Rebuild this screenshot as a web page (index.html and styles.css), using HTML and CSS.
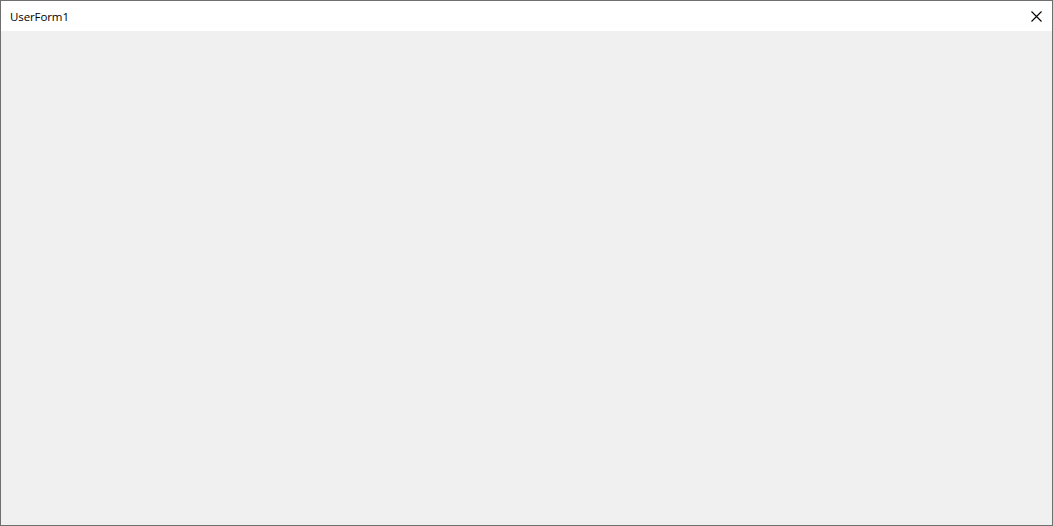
FILE: index.html
```html
<!DOCTYPE html>
<html>
<head>
<meta charset="utf-8">
<link rel="stylesheet" href="styles.css">
</head>
<body>
<div class="window">
  <div class="titlebar">
    <span class="title">UserForm1</span>
    <span class="close">
      <svg width="11" height="11" viewBox="0 0 11 11"><path d="M0.5 0.5 L10.5 10.5 M10.5 0.5 L0.5 10.5" stroke="#000" stroke-width="1.1" fill="none"/></svg>
    </span>
  </div>
  <div class="client"></div>
</div>
</body>
</html>
```
FILE: styles.css
```css
html, body { margin: 0; padding: 0; width: 1053px; height: 526px; overflow: hidden; }
.window {
  box-sizing: border-box;
  width: 1053px; height: 526px;
  border: 1px solid #6f6f6f;
  display: flex; flex-direction: column;
  background: #f0f0f0;
}
.titlebar {
  height: 30px; flex: none;
  background: #fff;
  display: flex; align-items: center; justify-content: space-between;
  padding-left: 9px;
}
.title {
  font-family: "Open Sans", "Liberation Sans", sans-serif;
  font-size: 11.5px; color: #000;
  letter-spacing: -0.1px;
}
.close {
  width: 26px; height: 30px; margin-right: 3px;
  display: flex; align-items: center; justify-content: center;
}
.close svg { display: block; }
.client { flex: 1; background: #f0f0f0; }
```
